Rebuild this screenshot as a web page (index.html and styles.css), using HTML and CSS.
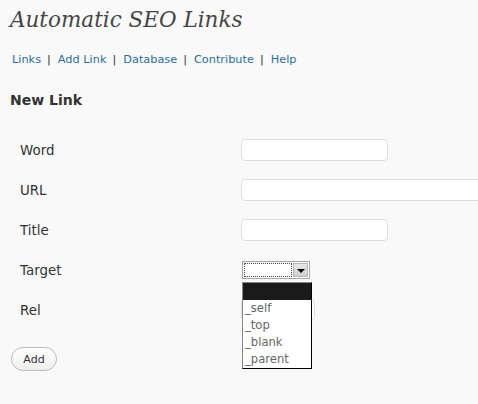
FILE: index.html
```html
<!DOCTYPE html>
<html lang="en">
  <head>
    <meta charset="UTF-8" />
    <title>Automatic SEO Links</title>
    <link rel="stylesheet" href="styles.css">
  </head>
  <body>
    <div class="wrap">
      <h2 class="page-title">Automatic SEO Links</h2>
      <ul class="subnav">
        <li><a href="#">Links</a></li>
        <li><a href="#">Add Link</a></li>
        <li><a href="#">Database</a></li>
        <li><a href="#">Contribute</a></li>
        <li><a href="#">Help</a></li>
      </ul>
      <h3 class="section-title">New Link</h3>
      <form class="link-form">
        <div class="row">
          <label for="word">Word</label>
          <input type="text" id="word" class="field" />
        </div>
        <div class="row">
          <label for="url">URL</label>
          <input type="text" id="url" class="field wide" />
        </div>
        <div class="row">
          <label for="title">Title</label>
          <input type="text" id="title" class="field" />
        </div>
        <div class="row">
          <label>Target</label>
          <div class="select-wrap">
            <div class="select">
              <span class="select-value"></span>
              <span class="select-arrow"></span>
            </div>
            <ul class="dropdown">
              <li class="selected">&nbsp;</li>
              <li>_self</li>
              <li>_top</li>
              <li>_blank</li>
              <li>_parent</li>
            </ul>
          </div>
        </div>
        <div class="row">
          <label for="rel">Rel</label>
          <input type="text" id="rel" class="field short" />
        </div>
        <button type="button" class="button">Add</button>
      </form>
    </div>
  </body>
</html>
```

FILE: styles.css
```css
body {
  margin: 0;
  background-color: #f9f9f9;
  font-family: "DejaVu Sans", Verdana, sans-serif;
  color: #333;
}
.wrap {
  padding: 0 10px;
}
.page-title {
  font-family: "DejaVu Serif", Georgia, serif;
  font-style: italic;
  font-weight: normal;
  font-size: 21.5px;
  color: #464646;
  margin: 0;
  padding-top: 5px;
  height: 36px;
  line-height: 30px;
}
.subnav {
  list-style: none;
  margin: 10px 0 0 2px;
  padding: 0;
  display: flex;
  font-size: 11.3px;
  line-height: 18px;
}
.subnav li + li::before {
  content: "|";
  color: #333;
  margin: 0 7px 0 6px;
}
.subnav a {
  color: #2e6e9e;
  text-decoration: none;
}
.section-title {
  font-size: 14px;
  font-weight: bold;
  margin: 22px 0 0;
  line-height: 18px;
  color: #333;
}
.link-form {
  margin-top: 21px;
}
.row {
  display: grid;
  grid-template-columns: 221px 1fr;
  align-items: center;
  height: 40px;
  padding-left: 10px;
  font-size: 13.4px;
}
.field {
  box-sizing: border-box;
  width: 147px;
  height: 22px;
  border: 1px solid #dfdfdf;
  border-radius: 4px;
  background: #fff;
  margin: 0;
}
.field.wide {
  width: 260px;
}
.field.short {
  width: 74px;
}
.select-wrap {
  position: relative;
  height: 18px;
  margin-left: 1px;
}
.select {
  display: flex;
  box-sizing: border-box;
  width: 68px;
  height: 18px;
  border: 1px solid #a5a5a5;
  background: #fff;
  padding: 1px;
}
.select-value {
  flex: 1;
  border: 1px dotted #444;
}
.select-arrow {
  width: 15px;
  margin-left: 1px;
  background: linear-gradient(#e8e8e8, #cfcfcf);
  border: 1px solid #b5b5b5;
  box-sizing: border-box;
  position: relative;
}
.select-arrow::after {
  content: "";
  position: absolute;
  left: 3px;
  top: 5px;
  border-left: 4px solid transparent;
  border-right: 4px solid transparent;
  border-top: 4px solid #000;
}
.dropdown {
  position: absolute;
  top: 21px;
  left: 0;
  z-index: 2;
  list-style: none;
  margin: 0;
  padding: 0;
  width: 70px;
  box-sizing: border-box;
  background: #fff;
  border: 1px solid #000;
  border-left-color: #888;
  border-top-color: #888;
  font-size: 11.6px;
  color: #666;
}
.dropdown li {
  height: 17px;
  line-height: 17px;
  padding-left: 2px;
}
.dropdown li.selected {
  background: #1a1a1a;
  height: 17px;
}
.button {
  margin: 17px 0 0 1px;
  font-family: "DejaVu Sans", Verdana, sans-serif;
  font-size: 11px;
  color: #333;
  width: 46px;
  height: 24px;
  padding: 0;
  border: 1px solid #bbb;
  border-radius: 12px;
  background: linear-gradient(#fff, #eee);
}
```
